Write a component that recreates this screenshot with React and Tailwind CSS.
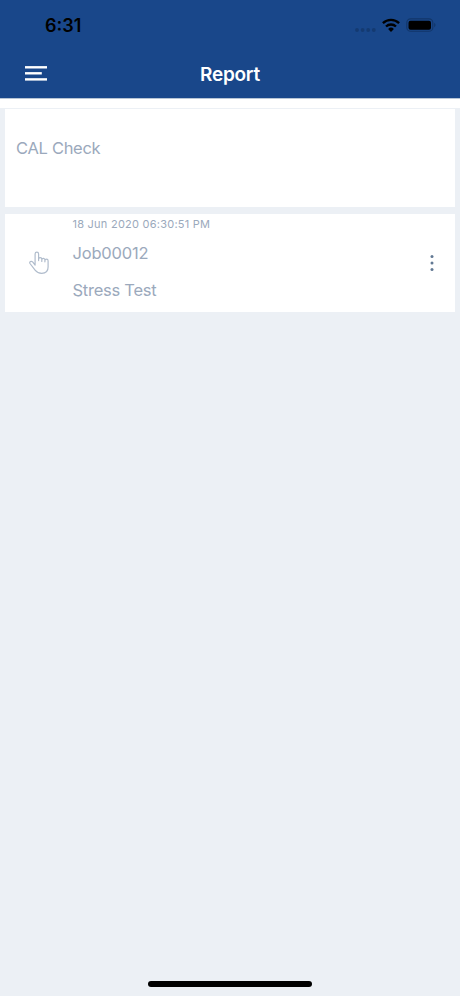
function Header() {
  return (
    <header className="flex h-[98px] shrink-0 flex-col bg-[#19478a]">
      <div className="flex h-[50px] items-center justify-between pl-[45px] pr-[24px]">
        <span className="pt-px text-[18px] leading-[22px] font-semibold text-black">6:31</span>
        <div className="flex items-center">
          <svg className="mr-[6px] mt-[10px] h-[4px] w-[21px]" viewBox="0 0 21 4" fill="#143a71">
            <circle cx="2" cy="2" r="1.9" />
            <circle cx="7.6" cy="2" r="1.9" />
            <circle cx="13.2" cy="2" r="1.9" />
            <circle cx="18.8" cy="2" r="1.9" />
          </svg>
          <svg className="h-[14px] w-[18px]" viewBox="0 0 18 14" fill="none" stroke="#000" strokeWidth="2.3">
            <path d="M.9 5.1a11.6 11.6 0 0 1 16.2 0" />
            <path d="M4 8.5a7.2 7.2 0 0 1 10 0" />
            <path d="M6.1 11a4.2 4.2 0 0 1 5.8 0L9 13.9Z" fill="#000" stroke="none" />
          </svg>
          <svg className="ml-[6px] h-[14px] w-[30px]" viewBox="0 0 30 14">
            <rect x=".8" y=".9" width="26" height="12.4" rx="3.8" fill="none" stroke="#12366a" strokeWidth="1.1" />
            <rect x="2.5" y="2.7" width="22.5" height="9" rx="2" fill="#000" />
            <path d="M28.2 4.8c1.8.7 1.8 3.7 0 4.4Z" fill="#12366a" />
          </svg>
        </div>
      </div>
      <div className="grid h-[48px] grid-cols-[1fr_auto_1fr] items-center">
        <svg className="ml-[25px] h-[16px] w-[22px]" viewBox="0 0 22 16" fill="#fff">
          <rect y=".1" width="22" height="2.4" />
          <rect y="6.1" width="16.8" height="2.4" />
          <rect y="12.2" width="22" height="2.4" />
        </svg>
        <h1 className="pt-[2px] text-[19px] leading-[24px] font-semibold tracking-[-0.25px] text-white">Report</h1>
        <span />
      </div>
    </header>
  );
}

function HandPointer() {
  return (
    <svg className="h-[24px] w-[20px]" viewBox="0 0 20 24" fill="none" stroke="#b0bccc" strokeWidth="1.2" strokeLinecap="round" strokeLinejoin="round">
      <path d="M6.1 14V2.9a1.75 1.75 0 0 1 3.5 0V9.6M9.6 9.6V8.2a1.6 1.6 0 0 1 3.2 0v2.3M12.8 8.9a1.55 1.55 0 0 1 3.1 0v1.9M15.9 9.8a1.6 1.6 0 0 1 3.2 0v6.2c0 3.9-2.6 6.3-6.4 6.3-3 0-4.9-.9-6.4-2.9L1 12.5c-.7-1 0-2.2 1.2-2.2.6 0 1 .2 1.4.6L6.1 14" />
    </svg>
  );
}

export default function App() {
  return (
    <div className="flex h-[996px] w-[460px] flex-col bg-[#ecf0f5] font-['Inter',sans-serif] text-[#9ba9bc]">
      <Header />
      <div className="h-[10px] shrink-0 border-t border-[#b7c5d5] bg-white" />
      <main className="flex flex-1 flex-col gap-[7.5px] px-[5px] pt-px">
        <section className="h-[97.5px] bg-white pl-[11px] pt-[27px]">
          <h2 className="text-[16.5px] leading-[24px] tracking-[-0.3px]">CAL Check</h2>
        </section>
        <section className="flex h-[98px] items-center bg-white pl-[24px] pr-[21px]">
          <HandPointer />
          <div className="ml-[23.5px] flex h-full flex-1 flex-col">
            <p className="mt-[2px] text-[11px] leading-[16px] tracking-[0.24px]">18 Jun 2020 06:30:51 PM</p>
            <p className="mt-[9px] text-[16.5px] leading-[24px] tracking-[-0.2px]">Job00012</p>
            <p className="mt-[13px] text-[16.5px] leading-[24px] tracking-[-0.25px]">Stress Test</p>
          </div>
          <svg className="h-[18px] w-[4px]" viewBox="0 0 4 18" fill="#627994">
            <circle cx="2" cy="2.4" r="1.5" />
            <circle cx="2" cy="9" r="1.5" />
            <circle cx="2" cy="15.6" r="1.5" />
          </svg>
        </section>
      </main>
      <div className="mx-auto mb-[9px] h-[6px] w-[164px] rounded-full bg-black" />
    </div>
  );
}
